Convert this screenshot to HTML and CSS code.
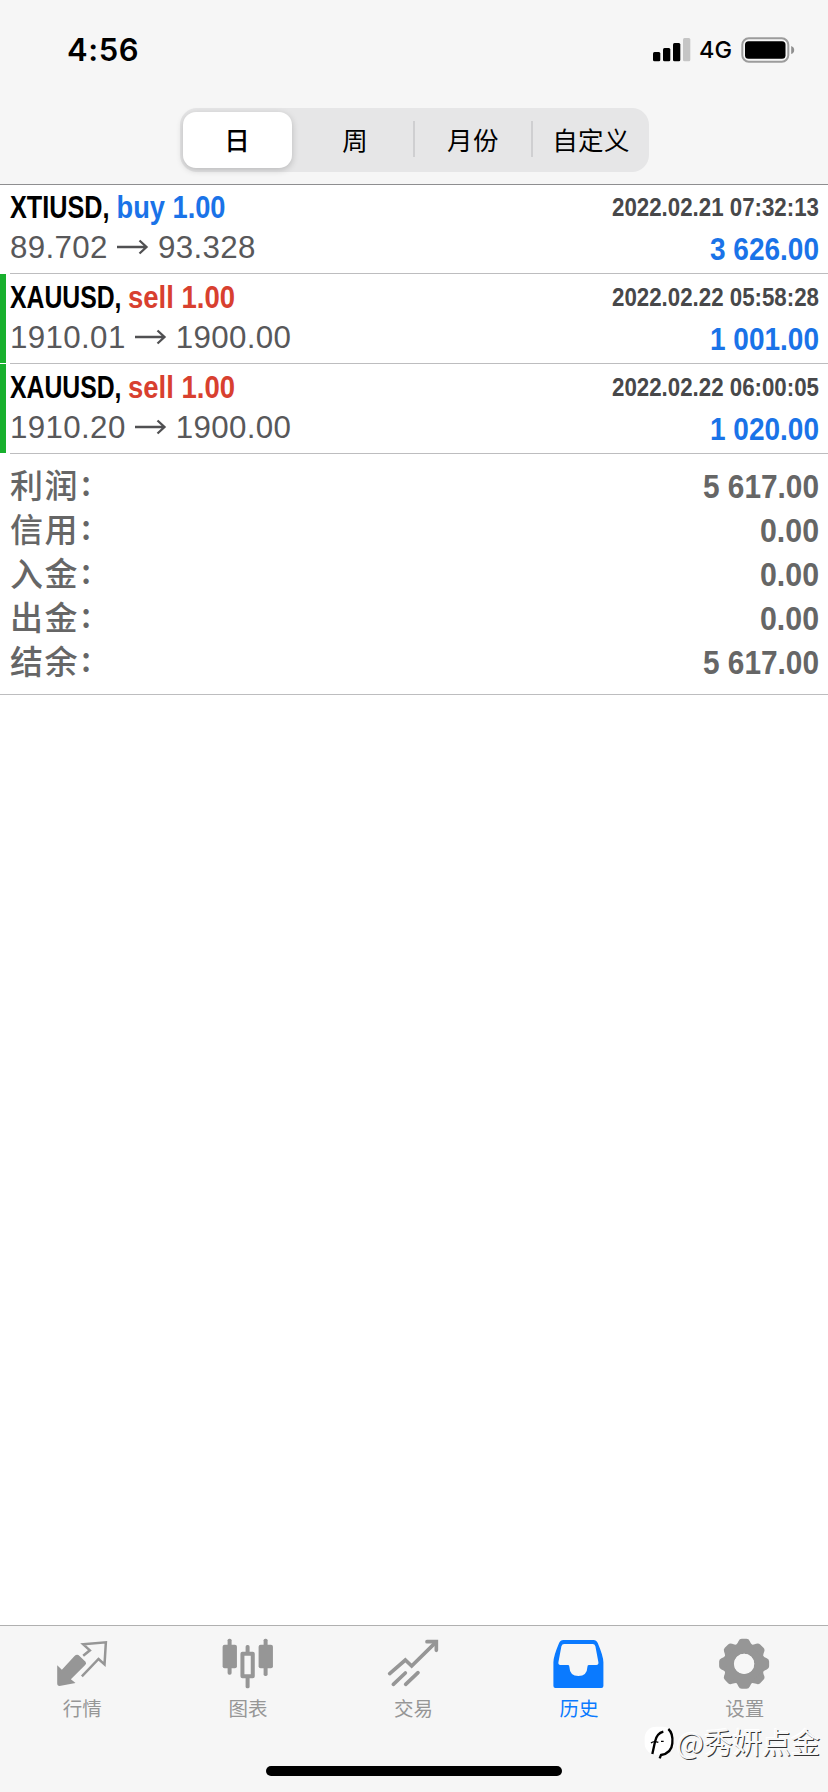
FILE: index.html
```html
<!DOCTYPE html>
<html lang="zh-CN">
<head>
<meta charset="utf-8">
<title>历史</title>
<link rel="stylesheet" href="styles.css">
</head>
<body>
<div class="screen">
  <header class="header">
    <div class="status">
      <span class="time">4:56</span>
      <div class="status-right">
        <svg class="signal" width="38" height="24" viewBox="0 0 38 24"><rect x="0" y="14" width="7.3" height="9.300" rx="1.500"/><rect x="10" y="10" width="7.300" height="13.300" rx="1.500"/><rect x="20" y="5" width="7.300" height="18.300" rx="1.500"/><rect class="dim" x="30" y="0" width="7.300" height="23.300" rx="1.500"/></svg>
        <span class="network">4G</span>
        <svg class="battery" width="54" height="26" viewBox="0 0 54 26"><rect x="1.300" y="1.300" width="46" height="23.400" rx="6.500" fill="none" stroke="#9c9c9c" stroke-width="2"/><rect x="4" y="4.300" width="40.500" height="17.400" rx="3.500"/><path d="M50.200 9q3 1 3 4t-3 4z" fill="#8f8f8f"/></svg>
      </div>
    </div>
    <nav class="segments">
      <span class="segment selected">日</span>
      <span class="segment">周</span>
      <span class="segment divided">月份</span>
      <span class="segment divided">自定义</span>
    </nav>
  </header>

  <main class="content">
    <article class="deal first">
      <div class="line">
        <div class="title"><svg class="cond" width="106" height="40"><text x="0" y="29.500" textLength="99.500" lengthAdjust="spacingAndGlyphs">XTIUSD,</text></svg><svg class="cond buy" width="110" height="40"><text x="0.500" y="29.500" textLength="109" lengthAdjust="spacingAndGlyphs">buy 1.00</text></svg></div>
        <svg class="cond date" width="207" height="40"><text x="0" y="28" textLength="207" lengthAdjust="spacingAndGlyphs">2022.02.21 07:32:13</text></svg>
      </div>
      <div class="line">
        <div class="prices"><span>89.702</span><svg class="arrow" width="31" height="16" viewBox="0 0 31 16"><path d="M0 8H29M22.500 1.500L29.500 8L22.500 14.500"/></svg><span>93.328</span></div>
        <svg class="cond profit" width="109" height="40"><text x="0" y="31.500" textLength="109" lengthAdjust="spacingAndGlyphs">3 626.00</text></svg>
      </div>
    </article>
    <article class="deal take">
      <div class="line">
        <div class="title"><svg class="cond" width="118" height="40"><text x="0" y="29.500" textLength="111.500" lengthAdjust="spacingAndGlyphs">XAUUSD,</text></svg><svg class="cond sell" width="108" height="40"><text x="0" y="29.500" textLength="107" lengthAdjust="spacingAndGlyphs">sell 1.00</text></svg></div>
        <svg class="cond date" width="207" height="40"><text x="0" y="28" textLength="207" lengthAdjust="spacingAndGlyphs">2022.02.22 05:58:28</text></svg>
      </div>
      <div class="line">
        <div class="prices"><span>1910.01</span><svg class="arrow" width="31" height="16" viewBox="0 0 31 16"><path d="M0 8H29M22.500 1.500L29.500 8L22.500 14.500"/></svg><span>1900.00</span></div>
        <svg class="cond profit" width="109" height="40"><text x="0" y="31.500" textLength="109" lengthAdjust="spacingAndGlyphs">1 001.00</text></svg>
      </div>
    </article>
    <article class="deal take">
      <div class="line">
        <div class="title"><svg class="cond" width="118" height="40"><text x="0" y="29.500" textLength="111.500" lengthAdjust="spacingAndGlyphs">XAUUSD,</text></svg><svg class="cond sell" width="108" height="40"><text x="0" y="29.500" textLength="107" lengthAdjust="spacingAndGlyphs">sell 1.00</text></svg></div>
        <svg class="cond date" width="207" height="40"><text x="0" y="28" textLength="207" lengthAdjust="spacingAndGlyphs">2022.02.22 06:00:05</text></svg>
      </div>
      <div class="line">
        <div class="prices"><span>1910.20</span><svg class="arrow" width="31" height="16" viewBox="0 0 31 16"><path d="M0 8H29M22.500 1.500L29.500 8L22.500 14.500"/></svg><span>1900.00</span></div>
        <svg class="cond profit" width="109" height="40"><text x="0" y="31.500" textLength="109" lengthAdjust="spacingAndGlyphs">1 020.00</text></svg>
      </div>
    </article>

    <section class="summary">
      <div class="total"><span>利润<i>:</i></span><svg class="cond sum" width="116" height="44"><text x="0" y="33.700" textLength="116" lengthAdjust="spacingAndGlyphs">5 617.00</text></svg></div>
      <div class="total"><span>信用<i>:</i></span><svg class="cond sum" width="59" height="44"><text x="0" y="33.700" textLength="59" lengthAdjust="spacingAndGlyphs">0.00</text></svg></div>
      <div class="total"><span>入金<i>:</i></span><svg class="cond sum" width="59" height="44"><text x="0" y="33.700" textLength="59" lengthAdjust="spacingAndGlyphs">0.00</text></svg></div>
      <div class="total"><span>出金<i>:</i></span><svg class="cond sum" width="59" height="44"><text x="0" y="33.700" textLength="59" lengthAdjust="spacingAndGlyphs">0.00</text></svg></div>
      <div class="total"><span>结余<i>:</i></span><svg class="cond sum" width="116" height="44"><text x="0" y="33.700" textLength="116" lengthAdjust="spacingAndGlyphs">5 617.00</text></svg></div>
    </section>
  </main>

  <footer class="footer">
    <nav class="tabs">
      <div class="tab">
        <svg class="icon" viewBox="170.400 81 156 162"><path fill="currentColor" d="M171 166L185 179L223 138Q231 131 238 138L256 155Q260 160 255 165L212 208L226 219L178 228Q171 228 171 220Z"/><path fill="none" stroke="currentColor" stroke-width="7.500" d="M249 137L269 121L249 103L317 97L313 163L295 147L245 199"/></svg>
        <span>行情</span>
      </div>
      <div class="tab">
        <svg class="icon" viewBox="667.200 81 156 162"><g fill="currentColor"><rect x="684" y="86" width="12" height="108" rx="5"/><rect x="669" y="104" width="43" height="71" rx="6"/><rect x="792" y="86" width="12" height="112" rx="5"/><rect x="777" y="104" width="43" height="71" rx="6"/><rect x="738" y="105" width="12" height="28" rx="5"/><rect x="738" y="198" width="12" height="37" rx="5"/></g><rect x="728.500" y="131.500" width="31" height="67" fill="none" stroke="currentColor" stroke-width="12" stroke-linejoin="round"/></svg>
        <span>图表</span>
      </div>
      <div class="tab">
        <svg class="icon" viewBox="264 81 156 162"><path fill="none" stroke="currentColor" stroke-width="11" stroke-linecap="round" d="M269 191L316 150L335 168L407 97M280 223L316 189M317 223L354 188"/><path fill="none" stroke="currentColor" stroke-width="11" stroke-linecap="round" d="M381 95H409V121"/></svg>
        <span>交易</span>
      </div>
      <div class="tab active">
        <svg class="icon" viewBox="760.800 81 156 162"><path fill="currentColor" fill-rule="evenodd" d="M789 90H879Q888 90 892 99Q909 139 909 157V228Q909 234 903 234H765Q759 234 759 228V157Q759 139 776 99Q780 90 789 90ZM791 102Q785 102 783 109L774 157Q773 165 780 165H803Q807 165 807 171Q808 198 834 198Q860 198 861 171Q861 165 865 165H888Q895 165 894 157L885 109Q883 102 877 102Z"/></svg>
        <span>历史</span>
      </div>
      <div class="tab">
        <svg class="icon" viewBox="477.600 81 156 162"><g transform="translate(553 161.500)"><circle r="46" fill="none" stroke="currentColor" stroke-width="32"/><g fill="currentColor"><path id="tooth" d="M-26 -54Q-19 -62 -17 -68Q-14 -75 -7 -75H7Q14 -75 17 -68Q19 -62 26 -54Z"/><use href="#tooth" transform="rotate(45)"/><use href="#tooth" transform="rotate(90)"/><use href="#tooth" transform="rotate(135)"/><use href="#tooth" transform="rotate(180)"/><use href="#tooth" transform="rotate(225)"/><use href="#tooth" transform="rotate(270)"/><use href="#tooth" transform="rotate(315)"/></g><circle r="30.500" fill="#f7f7f7"/></g></svg>
        <span>设置</span>
      </div>
    </nav>
    <div class="home"></div>
    <div class="watermark">
      <svg width="32" height="34" viewBox="0 0 96 102"><rect x="2" y="2" width="88" height="84" rx="34" fill="#fff"/><g fill="none" stroke="#000"><path stroke-width="7" d="M25 84L33 47Q38 22 58 17"/><path stroke-width="4" d="M21 51Q29 44 43 49M51 46H59"/><path stroke-width="7" d="M73 9Q88 22 85 52Q83 81 51 87L47 97"/></g></svg>
      <span>@秀妍点金</span>
    </div>
  </footer>
</div>
</body>
</html>
```
FILE: styles.css
```css
* { box-sizing: border-box; }
body { margin: 0; background: #fff; }
svg { display: block; overflow: visible; flex: none; }

.screen {
  width: 828px;
  height: 1792px;
  display: flex;
  flex-direction: column;
  overflow: hidden;
  font-family: "Liberation Sans", "Noto Sans CJK SC", sans-serif;
}

.header {
  height: 185px;
  background: #f6f6f6;
  border-bottom: 1px solid #8e8e90;
  display: flex;
  flex-direction: column;
  align-items: center;
}
.status {
  width: 100%;
  height: 108px;
  padding: 30px 33px 0 67px;
  display: flex;
  justify-content: space-between;
  font-family: Inter, sans-serif;
}
.time { font-size: 31px; font-weight: 600; line-height: 40px; height: 40px; letter-spacing: .6px; }
.status-right { display: flex; align-items: center; height: 40px; }
.network { font-size: 23.5px; font-weight: 500; line-height: 40px; margin-left: 8px; width: 42px; }
.signal .dim { fill: #c5c5c5; }

.segments {
  width: 469px;
  height: 64px;
  padding: 4px 3px;
  border-radius: 17px;
  background: #e6e6e7;
  display: flex;
  gap: 9px;
}
.segment {
  flex: 1;
  display: flex;
  align-items: center;
  justify-content: center;
  white-space: nowrap;
  font: 400 25.500px/54px "Noto Sans CJK SC", sans-serif;
  padding-bottom: 2px;
}
.selected {
  background: #fff;
  border-radius: 13px;
  font-weight: 500;
  box-shadow: 0 2px 7px rgba(0, 0, 0, .2);
}
.divided::before {
  content: "";
  width: 2px;
  height: 36px;
  margin-left: -6px;
  background: #cfcfd1;
}
.divided { justify-content: space-between; letter-spacing: .4px; }
.divided::after { content: ""; width: 0; margin-right: -4px; }

.content { flex: 1; }
.deal {
  height: 90px;
  padding: 4px 0 5px 10px;
  position: relative;
}
.deal.first { height: 89px; padding-top: 3px; }
.deal::after {
  content: "";
  position: absolute;
  left: 10px;
  right: 0;
  bottom: 0;
  height: 1px;
  background: #bdbdbf;
}
.take::before {
  content: "";
  position: absolute;
  left: 0;
  top: 0;
  bottom: 1px;
  width: 6px;
  background: #18b02d;
}
.line {
  height: 40px;
  padding-right: 9px;
  display: flex;
  justify-content: space-between;
}
.title { display: flex; }
.cond { font: bold 31px "Liberation Sans", sans-serif; }
.date { font-size: 25px; fill: #48484a; }
.buy, .profit { fill: #1a73e8; }
.sell { fill: #d8402f; }
.prices {
  display: flex;
  align-items: center;
  gap: 9.500px;
  color: #58585a;
  font-size: 31.300px;
  line-height: 40px;
  letter-spacing: .36px;
}
.arrow { fill: none; stroke: #505052; stroke-width: 2.300; margin-bottom: 2px; }

.summary {
  height: 241px;
  padding: 10px 9px 0 10px;
  border-bottom: 1px solid #bdbdbf;
  color: #666;
}
.total {
  height: 44px;
  display: flex;
  justify-content: space-between;
  font: 500 33px/41px "Noto Sans CJK SC", sans-serif;
}
.total span { display: flex; letter-spacing: 1.500px; }
.total i { font: 500 34px/35px "Noto Sans CJK SC", sans-serif; margin-left: 2px; }
.sum { font-size: 33px; fill: #666; }

.footer {
  height: 167px;
  background: #f6f6f6;
  border-top: 1px solid #b0b0b0;
  position: relative;
}
.tabs { display: flex; height: 140px; padding-top: 11px; }
.tab {
  flex: 1;
  display: flex;
  flex-direction: column;
  align-items: center;
  color: #969696;
  font: 400 19.500px/30px "Noto Sans CJK SC", sans-serif;
}
.tab span { padding-right: 1px; }
.icon { width: 52px; height: 54px; margin-bottom: 2px; }
.active { color: #0a7aff; }
.home { width: 296px; height: 10px; margin: 0 auto; border-radius: 5px; background: #000; }
.watermark {
  position: absolute;
  right: 8px;
  top: 99px;
  display: flex;
  align-items: center;
  gap: 1px;
  height: 36px;
  color: #f7f7f7;
  font: 400 29px/32px "Noto Sans CJK SC", sans-serif;
  text-shadow: 1px 1px 0 #333, -1px -1px 0 #fff;
}
.watermark span { padding-bottom: 4px; }
```
